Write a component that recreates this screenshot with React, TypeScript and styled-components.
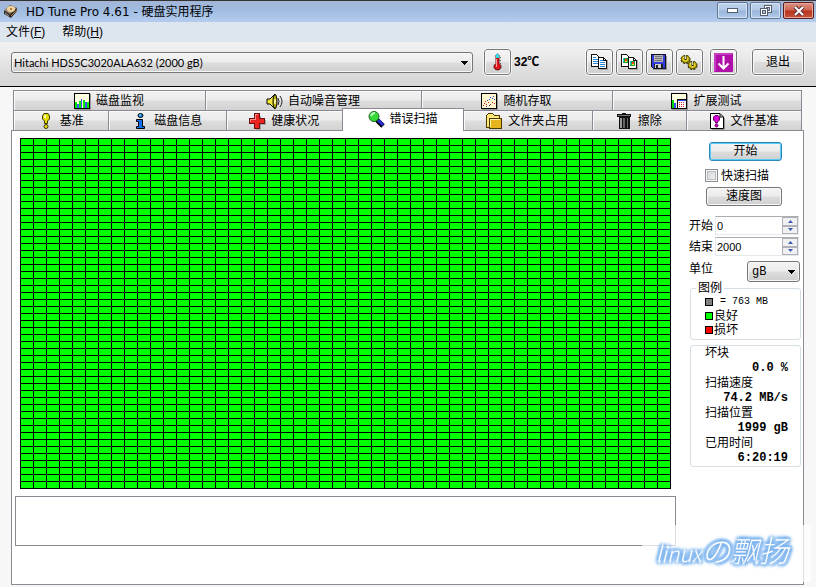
import React, { useState } from "react";
import styled, { createGlobalStyle, css } from "styled-components";

const ui = `"Liberation Sans", "Noto Sans CJK SC", sans-serif`;
const narrow = `Lato, "Noto Sans CJK SC", sans-serif`;
const wide = `"DejaVu Sans", "Noto Sans CJK SC", sans-serif`;
const mono = `"Liberation Mono", "Noto Sans CJK SC", monospace`;
const line = "#8c8994";
const face = "linear-gradient(#f4f4f4 0%, #ececec 48%, #dddddd 52%, #cfcfcf 100%)";

const GlobalStyle = createGlobalStyle`
  * { box-sizing: border-box; }
  body { margin: 0; background: #f7f7f7; color: #000; font: 12px/16px ${ui}; }
  button, input, select { font: inherit; color: inherit; margin: 0; }
`;

const Window = styled.div`
  min-height: 100vh;
  display: flex;
  flex-direction: column;
`;

const TitleBar = styled.header`
  display: flex;
  align-items: center;
  height: 22px;
  padding: 0 2px 0 3px;
  gap: 8px;
  border-top: 1px solid #333;
  background: linear-gradient(#a3b5d6, #a0bce2 45%, #b4cdee);
`;

const Title = styled.h1`
  flex: 1;
  margin: 0;
  font: 12px/18px ${wide};
`;

const WindowButtons = styled.div`
  display: flex;
  align-self: flex-start;
  gap: 2px;
  padding-top: 1px;
`;

const WindowButton = styled.button<{ $close?: boolean }>`
  width: 31px;
  height: 17px;
  padding: 0;
  display: grid;
  place-items: center;
  border: 1px solid ${(p) => (p.$close ? "#5a1c1c" : "#5f7591")};
  border-radius: 2px;
  box-shadow: inset 0 0 0 1px ${(p) => (p.$close ? "#e8a79b" : "#d5e3f5")};
  background: ${(p) =>
    p.$close
      ? "linear-gradient(#dc9284, #cf6552 48%, #b8311b 52%, #c9553c)"
      : "linear-gradient(#c0d2ea, #b1c8e6 48%, #98b4d8 52%, #b1cbea)"};
`;

const MenuBar = styled.nav`
  display: flex;
  gap: 17px;
  height: 20px;
  padding: 0 6px;
  background: #dde5ef;
`;

const MenuItem = styled.button`
  padding: 0;
  border: 0;
  background: none;
  line-height: 18px;
`;

const Toolbar = styled.div`
  display: flex;
  align-items: center;
  height: 45px;
  padding: 0 12px 4px 11px;
  border-bottom: 1px solid #000;
  background: linear-gradient(#f1f1f1, #ebebeb 30%, #e1e1e1 55%, #d4d4d4);
`;

const SelectBox = styled.span<{ $grow?: boolean }>`
  position: relative;
  display: block;
  ${(p) => (p.$grow ? "flex: 1;" : "width: 53px;")}
  height: 21px;

  svg { position: absolute; right: 5px; top: 9px; pointer-events: none; }
`;

const Select = styled.select<{ $mono?: boolean }>`
  appearance: none;
  display: block;
  width: 100%;
  height: 100%;
  padding: 0 20px 0 2px;
  border: 1px solid #777;
  border-radius: 3px;
  box-shadow: inset 0 0 0 1px #f6f6f6;
  background: ${face};
  font: 11px ${narrow};
  ${(p) => p.$mono && css`font: 12px ${mono}; padding-left: 4px;`}
`;

const ToolGroup = styled.div<{ $gap: number; $before: number }>`
  display: flex;
  align-items: center;
  gap: ${(p) => p.$gap}px;
  margin-left: ${(p) => p.$before}px;
`;

const ToolButton = styled.button<{ $wide?: boolean }>`
  width: ${(p) => (p.$wide ? 52 : 27)}px;
  height: 26px;
  padding: 0;
  display: grid;
  place-items: center;
  border: 1px solid #777;
  border-radius: 3px;
  outline: 1px solid #f5f5f5;
  box-shadow: inset 0 0 0 1px #f8f8f8;
  background: ${face};
`;

const Temperature = styled.output`
  margin-left: 3px;
  width: 42px;
  font-weight: bold;
`;

const Tabs = styled.div`
  margin: 3px 14px 0 13px;
`;

const TabRow = styled.div`
  display: flex;
  height: 20px;
  align-items: flex-end;
`;

const Tab = styled.button<{ $w: number; $active?: boolean }>`
  flex: ${(p) => p.$w} 1 0;
  min-width: 0;
  height: 20px;
  padding: 1px 1px 0 0;
  display: flex;
  align-items: center;
  justify-content: center;
  gap: 5px;
  white-space: nowrap;
  border: 0 solid ${line};
  border-width: 1px 1px 0 0;
  background: linear-gradient(#f1f1f1, #ebebeb 48%, #dedede 52%, #d2d2d2);
  box-shadow: inset 1px 1px 0 #fafafa;

  &:first-child { border-left-width: 1px; }

  ${(p) =>
    p.$active &&
    css`
      z-index: 1;
      height: 23px;
      margin-bottom: -1px;
      padding: 0 1px 2px 0;
      background: #fff;
      border-width: 1px 1px 0 0;
      box-shadow: -1px 0 0 ${line};
    `}
`;

const Panel = styled.main`
  flex: 1;
  display: flex;
  gap: 14px;
  margin: 0 12px 2px 11px;
  padding: 7px 2px 38px 3px;
  border: 1px solid ${line};
  background: #fff;
`;

const ScanArea = styled.section`
  flex: 1;
  min-width: 0;
`;

/* 50 by 50 blocks: each background tile is one block with its top and left rule. */
const BlockMap = styled.div`
  height: 351px;
  margin: 0 5px 7px;
  border: 0 solid #000;
  border-width: 0 1px 1px 0;
  background:
    linear-gradient(90deg, #000 1px, transparent 1px) 0 0 / 2% 2%,
    linear-gradient(#000 1px, #00ff00 1px) 0 0 / 2% 2%;
`;

const Messages = styled.div`
  height: 50px;
  border: 1px solid ${line};
`;

const Side = styled.aside`
  width: 111px;
  display: flex;
  flex-direction: column;
`;

const Actions = styled.div`
  display: flex;
  flex-direction: column;
  align-items: flex-end;
  padding: 4px 19px 0 0;
`;

const ActionButton = styled.button<{ $primary?: boolean }>`
  width: ${(p) => (p.$primary ? 73 : 76)}px;
  height: 19px;
  padding: 0;
  line-height: 15px;
  border: 1px solid ${(p) => (p.$primary ? "#2f86b8" : "#777")};
  border-radius: 3px;
  box-shadow: inset 0 0 0 1px ${(p) => (p.$primary ? "#55cdf5" : "#f8f8f8")};
  background: ${face};
`;

const Check = styled.label`
  display: flex;
  align-items: center;
  align-self: stretch;
  gap: 3px;
  height: 26px;
  padding: 3px 0 0 15px;
  white-space: nowrap;

  input {
    appearance: none;
    width: 13px;
    height: 13px;
    border: 1px solid #8e8f8f;
    box-shadow: inset 0 0 0 1px #f4f4f4, inset 0 0 0 2px #b9bdc4;
    background: linear-gradient(135deg, #cdd1d6, #f5f5f5);
  }
  input:checked { background: #3c62a8; }
`;

const Fields = styled.div`
  display: flex;
  flex-direction: column;
  gap: 2px;
  margin: 10px 2px 0 -1px;
`;

const Field = styled.div`
  display: flex;
  align-items: center;
  justify-content: space-between;
  height: 19px;
`;

const UnitField = styled(Field)`
  height: 21px;
  margin: 3px -1px 0 0;

  label { align-self: flex-start; }
`;

const Spinner = styled.span`
  display: flex;
  width: 84px;
  height: 19px;
  border: 1px solid #e3e9ef;
  border-top-color: #abadb3;

  input {
    flex: 1;
    min-width: 0;
    padding: 0 1px;
    border: 0;
    background: #fff;
    font-size: 11px;
  }
`;

const Steps = styled.span`
  display: grid;
  width: 16px;
`;

const Step = styled.button`
  padding: 0;
  display: grid;
  place-items: center;
  border: 1px solid #b0b0b8;
  background: #f0f0f0;
`;

const Legend = styled.fieldset`
  margin: 0;
  padding: 1px 0 2px 14px;
  border: 1px solid #d5dfe5;
  border-radius: 3px;
  min-width: 0;

  legend { margin-left: -9px; padding: 0 2px; line-height: 12px; }
`;

const LegendRow = styled.div`
  display: flex;
  align-items: center;
  height: 14px;
  gap: 1px;
  line-height: 14px;

  code { font: 10px/14px ${mono}; padding-left: 6px; white-space: nowrap; }
`;

const Swatch = styled.i<{ $color: string }>`
  width: 8px;
  height: 8px;
  border: 1px solid #000;
  background: ${(p) => p.$color};
`;

const Stats = styled.dl`
  margin: 5px 0 0;
  padding: 0 12px 0 14px;
  border: 1px solid #d5dfe5;
  border-radius: 3px;

  dt, dd { margin: 0; line-height: 15px; }
  dd { font: bold 12px/15px ${mono}; text-align: right; }
`;

const Watermark = styled.div`
  position: fixed;
  z-index: 2;
  right: 5px;
  bottom: 5px;
  width: 169px;
  height: 57px;
  padding: 4px 0 0 14px;
  background: rgba(255, 255, 255, 0.7);
  color: #fff;
  font: italic 300 29px/40px "Noto Sans CJK SC", sans-serif;
  white-space: nowrap;
  text-shadow: 2px 2px 2px #7db3ee, -2px 2px 2px #7db3ee, 2px -2px 2px #7db3ee, -2px -2px 2px #7db3ee,
    3px 0 3px #8dbdf0, -3px 0 3px #8dbdf0, 0 3px 3px #8dbdf0, 0 -3px 3px #8dbdf0;
`;

const WatermarkLatin = styled.span`
  font-size: 21px;
`;

const Svg = styled.svg`
  display: block;
  flex: none;
  overflow: visible;
`;

const Glyph = ({ children, w = 17, h = 17, smooth }: { children: React.ReactNode; w?: number; h?: number; smooth?: boolean }) => (
  <Svg width={w} height={h} viewBox={`0 0 ${w} ${h}`} shapeRendering={smooth ? "auto" : "crispEdges"} aria-hidden="true">
    {children}
  </Svg>
);

const Arrow = () => (
  <Glyph w={7} h={4}><path d="M0 0H7V1H6V2H5V3H4V4H3V3H2V2H1V1H0Z" /></Glyph>
);

const DriveIcon = () => (
  <Glyph w={15} h={15} smooth>
    <path d="M1 7L7 1L14 4V7L8 14L1 10Z" fill="#302c28" />
    <path d="M1 6L7 1L14 4L7 10Z" fill="#9b8b79" />
    <ellipse cx="8" cy="5" rx="4" ry="3" fill="#f1d39e" />
    <circle cx="8" cy="5" r="1" fill="#9b5d24" />
    <path d="M2 8L6 11V13L2 10Z" fill="#80766d" />
    <path d="M8 12L14 6" stroke="#b07338" />
  </Glyph>
);

const MonitorIcon = () => (
  <Glyph>
    <path d="M1 16.5H16.5V1" fill="none" stroke="#999" />
    <rect x=".5" y=".5" width="15" height="15" fill="#ffffdf" stroke="#000" />
    <path d="M1 9H3V15H1ZM5 8H7V15H5ZM9 7H11V15H9ZM13 9H15V15H13Z" fill="#00ed00" />
    <path d="M3 11H5V15H3ZM7 6H8V15H7ZM11 9H13V15H11Z" fill="#4050ff" />
  </Glyph>
);

const SpeakerIcon = () => (
  <Glyph smooth>
    <path d="M1 6H4L9 1V16L4 11H1Z" fill="#f3e63a" stroke="#000" />
    <ellipse cx="9" cy="8.5" rx="2" ry="7" fill="#b4a800" stroke="#000" />
    <ellipse cx="9" cy="8.5" rx="1" ry="3" fill="#ffffb0" />
    <path d="M12 5Q14 8.5 12 12M14 3Q18 8.5 14 14" fill="none" stroke="#222" />
  </Glyph>
);

const ScatterIcon = () => (
  <Glyph>
    <path d="M1 16.5H16.5V1" fill="none" stroke="#999" />
    <rect x=".5" y=".5" width="15" height="15" fill="#fff6d0" stroke="#000" />
    <path d="M2 12h1v1h-1zM3 10h1v1h-1zM5 11h1v1h-1zM7 9h1v1h-1zM9 11h1v1h-1zM11 9h1v1h-1zM13 10h1v1h-1zM4 8h1v1h-1z" fill="#e02020" />
    <path d="M6 7h1v1h-1zM8 6h1v1h-1zM9 4h1v1h-1zM11 5h1v1h-1zM12 3h1v1h-1zM13 6h1v1h-1zM5 13h1v1h-1zM8 12h1v1h-1z" fill="#3038e0" />
  </Glyph>
);

const ExtendedIcon = () => (
  <Glyph>
    <path d="M1 16.5H16.5V1" fill="none" stroke="#999" />
    <rect x=".5" y=".5" width="15" height="15" fill="#ffffdf" stroke="#000" />
    <path d="M1 7H3V15H1Z" fill="#00d400" /><path d="M3 10H5V15H3Z" fill="#3747ff" />
    <rect x="6.5" y="6.5" width="9" height="9" fill="#fff" stroke="#000" />
    <path d="M7 7H15V8H7Z" fill="#3747ff" />
    <path d="M8 9h1v1h-1zM10 9h1v1h-1zM12 9h1v1h-1zM8 11h1v1h-1zM10 11h1v1h-1zM12 11h1v1h-1zM8 13h1v1h-1zM10 13h1v1h-1zM12 13h1v1h-1z" fill="#d22" />
  </Glyph>
);

const BangIcon = () => (
  <Glyph smooth>
    <path d="M4.500 3L6 .5H10L11.500 3V6L9.500 8V10.500H6.500V8L4.500 6Z" fill="#e7dc00" stroke="#3c3800" />
    <circle cx="8" cy="13.500" r="2" fill="#e7dc00" stroke="#3c3800" />
    <path d="M6 2H8V5H6Z" fill="#ffffb0" />
  </Glyph>
);

const InfoIcon = () => (
  <Glyph smooth>
    <ellipse cx="8.5" cy="2.5" rx="2.5" ry="2" fill="#1687f5" stroke="#000" />
    <path d="M4.5 6.5H10.5V13.5H12.5V15.5H4.5V13.5H6.5V8.5H4.5Z" fill="#1670ee" stroke="#000" />
    <path d="M7 2H9" stroke="#7de2ff" />
  </Glyph>
);

const CrossIcon = () => (
  <Glyph>
    <path d="M7 3H12V7H17V12H12V17H7Z" fill="#aaa" />
    <path d="M5.5 .5H10.5V5.5H15.5V10.5H10.5V15.5H5.5V10.5H.5V5.5H5.5Z" fill="#ec2424" stroke="#701010" />
    <path d="M6.5 6V1.5H9M1.5 9V6.5H7" fill="none" stroke="#ff8b80" />
  </Glyph>
);

const LensIcon = () => (
  <Glyph smooth>
    <path d="M9 9L15 15" stroke="#000" strokeWidth="5" />
    <path d="M10 9L15 14" stroke="#2330d8" strokeWidth="3" />
    <circle cx="6" cy="5.5" r="5" fill="#36d936" stroke="#176617" />
    <path d="M3 5Q4 2 7 2" fill="none" stroke="#bbffc0" strokeWidth="2" />
  </Glyph>
);

const FolderIcon = () => (
  <Glyph>
    <path d="M.5 2.5L2.5 .5H6.5L8.5 2.5H13.5V14.5H.5Z" fill="#ffe875" stroke="#4b3900" />
    <path d="M3.5 5.5H15.5V15.5H3.5Z" fill="#e6b51d" stroke="#4b3900" />
    <path d="M4.5 14V6.5H14" fill="none" stroke="#fff3a0" />
  </Glyph>
);

const TrashIcon = () => (
  <Glyph>
    <path d="M1 1H6V0H10V1H15V4H14V16H3V4H1Z" fill="#111" />
    <path d="M2 2H14V3H2Z" fill="#777" />
    <path d="M4 5H6V15H4Z" fill="#999" />
    <path d="M7 5H9V15H7ZM11 5H12V15H11Z" fill="#666" />
  </Glyph>
);

const FileBangIcon = () => (
  <Glyph smooth>
    <path d="M3 16.5H15.5V5" fill="none" stroke="#999" />
    <path d="M1.500 .5H11L14.5 4V15.5H1.500Z" fill="#fff" stroke="#000" />
    <path d="M11 1V4H14" fill="none" stroke="#000" />
    <path d="M4.500 4L6 2.5H9L10.500 4V7L8.5 9V10H6.5V9L4.500 7Z" fill="#d800d8" stroke="#600060" />
    <circle cx="7.5" cy="12.5" r="1.5" fill="#d800d8" stroke="#600060" />
  </Glyph>
);

const Pages = ({ picture }: { picture?: boolean }) => (
  <Glyph>
    <path d="M8 15.500H16.500V6" fill="none" stroke="#aaa" />
    <path d="M.5 .5H5.5L8.5 3.5V12.5H.5Z" fill="#fff" stroke="#111" />
    <path d="M7.5 3.5H12.5L15.5 6.5V14.5H7.5Z" fill="#fff" stroke="#111" />
    <path d="M12.5 4V6.5H15" fill="none" stroke="#111" />
    {picture ? (
      <>
        <path d="M2 4H7V9H2ZM9 7H14V12H9Z" fill="#18a535" />
        <path d="M4 5H6V7H4ZM11 8H13V10H11Z" fill="#ff3b20" />
        <path d="M2 4H3V8H2ZM9 7H10V11H9Z" fill="#28bce8" />
        <path d="M4 7H6V8H4ZM11 10H13V11H11Z" fill="#ffe02f" />
      </>
    ) : (
      <path d="M2 3.5H5M2 5.5H7M2 7.5H7M2 9.5H7M9 6.5H12M9 8.5H14M9 10.5H14M9 12.5H14" stroke="#2787d8" />
    )}
  </Glyph>
);

const SaveIcon = () => (
  <Glyph>
    <path d="M.5 .5H14.5V14.5H2.5L.5 12.5Z" fill="#343bdc" stroke="#101020" />
    <path d="M3 1H12V8H3Z" fill="#b5b5b5" />
    <path d="M4 2.5H11M4 4.5H11M4 6.5H11" stroke="#777" />
    <path d="M3 10H12V14H3Z" fill="#222" /><path d="M4 10H10V14H4Z" fill="#ccc" /><path d="M5 11H7V14H5Z" fill="#222" />
    <path d="M2 15.500H15.500V2" fill="none" stroke="#999" />
  </Glyph>
);

const Gear = ({ x, y }: { x: number; y: number }) => (
  <g transform={`translate(${x} ${y})`}>
    <ellipse cx="4.500" cy="4.500" rx="4" ry="3.500" fill="#5a5200" stroke="#2c2800" strokeWidth="2" strokeDasharray="2 1" />
    <ellipse cx="4.500" cy="4" rx="4" ry="3.500" fill="#e0cc1c" stroke="#6a6000" />
    <path d="M2 3Q3 1.500 5 1.500" fill="none" stroke="#fff99a" />
    <path d="M4.500 0V5" stroke="#222" strokeWidth="2" />
    <path d="M4.500 0V4" stroke="#cfcfcf" />
  </g>
);

const GearsIcon = () => (
  <Glyph smooth>
    <Gear x={0} y={1} />
    <Gear x={7} y={7} />
  </Glyph>
);

const DownIcon = () => (
  <Glyph w={19} h={19} smooth>
    <rect width="19" height="19" rx="1" fill="#b010a8" />
    <path d="M1 18V1H18" fill="none" stroke="#dd66d6" />
    <path d="M9.5 3V15M4.5 10.5L9.5 15.5L14.5 10.5" fill="none" stroke="#fff" strokeWidth="2" />
  </Glyph>
);

const ThermoIcon = () => (
  <Glyph w={11} h={18} smooth>
    <path d="M4 2Q5.500 0 7 2V10.500Q9.500 12 9 14.500Q8 17 5.500 17Q3 17 2 14.500Q1.500 12 4 10.500Z" fill="#e0151c" stroke="#5a1115" />
    <path d="M4 1H7V5H4Z" fill="#30d8e2" />
    <path d="M4.500 6V14" stroke="#ff9d9d" />
    <path d="M8 4.500H9M8 7.500H9M8 10.500H9" stroke="#555" />
  </Glyph>
);

const topTabs = [
  { label: "磁盘监视", w: 192, icon: <MonitorIcon /> },
  { label: "自动噪音管理", w: 216, icon: <SpeakerIcon /> },
  { label: "随机存取", w: 191, icon: <ScatterIcon /> },
  { label: "扩展测试", w: 189, icon: <ExtendedIcon /> },
];

const bottomTabs = [
  { label: "基准", w: 95, icon: <BangIcon /> },
  { label: "磁盘信息", w: 118, icon: <InfoIcon /> },
  { label: "健康状况", w: 116, icon: <CrossIcon /> },
  { label: "错误扫描", w: 121, icon: <LensIcon /> },
  { label: "文件夹占用", w: 129, icon: <FolderIcon /> },
  { label: "擦除", w: 94, icon: <TrashIcon /> },
  { label: "文件基准", w: 115, icon: <FileBangIcon /> },
];

const stats = [
  ["坏块", "0.0 %"],
  ["扫描速度", "74.2 MB/s"],
  ["扫描位置", "1999 gB"],
  ["已用时间", "6:20:19"],
];

function RangeField({ id, label, initial }: { id: string; label: string; initial: number }) {
  const [value, setValue] = useState(initial);
  return (
    <Field>
      <label htmlFor={id}>{label}</label>
      <Spinner>
        <input id={id} inputMode="numeric" value={value} onChange={(e) => setValue(Number(e.target.value) || 0)} />
        <Steps>
          <Step aria-label={`${label} +`} onClick={() => setValue(value + 1)}>
            <Glyph w={5} h={3} smooth><path d="M0 3H5L2.500 0Z" fill="#3c56b4" /></Glyph>
          </Step>
          <Step aria-label={`${label} −`} onClick={() => setValue(Math.max(0, value - 1))}>
            <Glyph w={5} h={3} smooth><path d="M0 0H5L2.500 3Z" fill="#3c56b4" /></Glyph>
          </Step>
        </Steps>
      </Spinner>
    </Field>
  );
}

export default function App() {
  return (
    <>
      <GlobalStyle />
      <Window>
        <TitleBar>
          <DriveIcon />
          <Title>HD Tune Pro 4.61 - 硬盘实用程序</Title>
          <WindowButtons>
            <WindowButton aria-label="最小化">
              <Glyph w={11} h={5}><rect x=".5" y=".5" width="10" height="4" fill="#fff" stroke="#535e70" /></Glyph>
            </WindowButton>
            <WindowButton aria-label="还原">
              <Glyph w={12} h={11}>
                <path d="M4.500 .5H11.500V7.500H4.500Z" fill="#fff" stroke="#535e70" />
                <path d="M6.500 2.500H9.500V5.500H6.500Z" fill="#adc5e5" stroke="#535e70" />
                <path d="M.5 3.500H7.500V10.500H.5Z" fill="#fff" stroke="#535e70" />
                <path d="M2.500 5.500H5.500V8.500H2.500Z" fill="#adc5e5" stroke="#535e70" />
              </Glyph>
            </WindowButton>
            <WindowButton $close aria-label="关闭">
              <Glyph w={12} h={10} smooth>
                <path d="M2 1L10 9M10 1L2 9" stroke="#5d3434" strokeWidth="4" />
                <path d="M2 1L10 9M10 1L2 9" stroke="#fff" strokeWidth="2" />
              </Glyph>
            </WindowButton>
          </WindowButtons>
        </TitleBar>
        <MenuBar>
          <MenuItem>文件(<u>F</u>)</MenuItem>
          <MenuItem>帮助(<u>H</u>)</MenuItem>
        </MenuBar>
        <Toolbar>
          <SelectBox $grow>
            <Select aria-label="硬盘"><option>Hitachi HDS5C3020ALA632 (2000 gB)</option></Select>
            <Arrow />
          </SelectBox>
          <ToolGroup $gap={0} $before={11}>
            <ToolButton aria-label="温度"><ThermoIcon /></ToolButton>
            <Temperature>32℃</Temperature>
          </ToolGroup>
          <ToolGroup $gap={3} $before={30}>
            <ToolButton aria-label="复制文本"><Pages /></ToolButton>
            <ToolButton aria-label="复制图像"><Pages picture /></ToolButton>
            <ToolButton aria-label="保存"><SaveIcon /></ToolButton>
            <ToolButton aria-label="选项"><GearsIcon /></ToolButton>
          </ToolGroup>
          <ToolGroup $gap={15} $before={7}>
            <ToolButton aria-label="最小化到托盘"><DownIcon /></ToolButton>
            <ToolButton $wide>退出</ToolButton>
          </ToolGroup>
        </Toolbar>
        <Tabs role="tablist">
          <TabRow>
            {topTabs.map((t) => (
              <Tab key={t.label} role="tab" $w={t.w}>{t.icon}{t.label}</Tab>
            ))}
          </TabRow>
          <TabRow>
            {bottomTabs.map((t) => {
              const active = t.label === "错误扫描";
              return (
                <Tab key={t.label} role="tab" aria-selected={active} $w={t.w} $active={active}>{t.icon}{t.label}</Tab>
              );
            })}
          </TabRow>
        </Tabs>
        <Panel>
          <ScanArea>
            <BlockMap role="img" aria-label="错误扫描" />
            <Messages />
          </ScanArea>
          <Side>
            <Actions>
              <ActionButton $primary>开始</ActionButton>
              <Check><input type="checkbox" />快速扫描</Check>
              <ActionButton>速度图</ActionButton>
            </Actions>
            <Fields>
              <RangeField id="from" label="开始" initial={0} />
              <RangeField id="to" label="结束" initial={2000} />
              <UnitField>
                <label htmlFor="unit">单位</label>
                <SelectBox>
                  <Select id="unit" $mono><option>gB</option></Select>
                  <Arrow />
                </SelectBox>
              </UnitField>
            </Fields>
            <Legend>
              <legend>图例</legend>
              <LegendRow><Swatch $color="#808080" /><code>= 763 MB</code></LegendRow>
              <LegendRow><Swatch $color="#00ff00" />良好</LegendRow>
              <LegendRow><Swatch $color="#ff0000" />损坏</LegendRow>
            </Legend>
            <Stats>
              {stats.map(([name, value]) => (
                <React.Fragment key={name}>
                  <dt>{name}</dt>
                  <dd>{value}</dd>
                </React.Fragment>
              ))}
            </Stats>
          </Side>
        </Panel>
        <Watermark><WatermarkLatin>linux</WatermarkLatin>の飘扬</Watermark>
      </Window>
    </>
  );
}
